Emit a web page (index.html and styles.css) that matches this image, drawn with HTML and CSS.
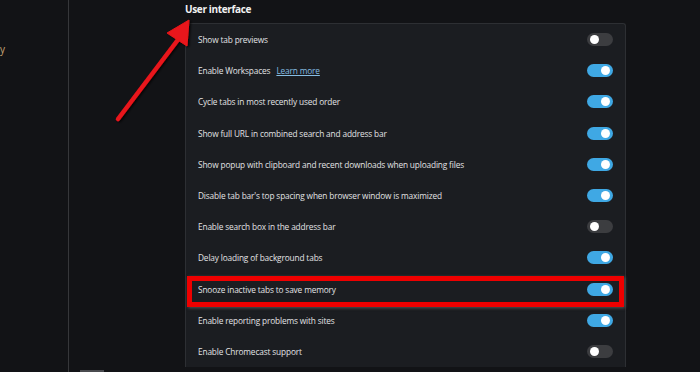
FILE: index.html
```html
<!doctype html>
<html lang="en">
<head>
    <meta charset="UTF-8">
    <title>Settings</title>
    <link rel="stylesheet" href="styles.css">
</head>
<body>
    <div class="sidebar">
        <span class="side-label">y</span>
        <div class="side-scroll"></div>
    </div>
    <div class="main">
        <div class="section">
            <div class="section-title">User interface</div>
            <div class="card">
                <div class="row"><span class="label">Show tab previews</span><span class="toggle"></span></div>
                <div class="row"><span class="label">Enable Workspaces <a class="link">Learn more</a></span><span class="toggle on"></span></div>
                <div class="row"><span class="label">Cycle tabs in most recently used order</span><span class="toggle on"></span></div>
                <div class="row"><span class="label">Show full URL in combined search and address bar</span><span class="toggle on"></span></div>
                <div class="row"><span class="label">Show popup with clipboard and recent downloads when uploading files</span><span class="toggle on"></span></div>
                <div class="row"><span class="label">Disable tab bar's top spacing when browser window is maximized</span><span class="toggle on"></span></div>
                <div class="row"><span class="label">Enable search box in the address bar</span><span class="toggle"></span></div>
                <div class="row"><span class="label">Delay loading of background tabs</span><span class="toggle on"></span></div>
                <div class="row marked"><span class="label">Snooze inactive tabs to save memory</span><span class="toggle on"></span><div class="highlight"></div></div>
                <div class="row"><span class="label">Enable reporting problems with sites</span><span class="toggle on"></span></div>
                <div class="row"><span class="label">Enable Chromecast support</span><span class="toggle"></span></div>
            </div>
        </div>
    </div>

    <!-- annotation arrow -->
    <svg class="arrow" width="110" height="120" viewBox="0 0 110 120">
        <defs>
            <filter id="shade" x="-20%" y="-20%" width="140%" height="140%">
                <feDropShadow dx="1.5" dy="1" stdDeviation="1" flood-color="#000" flood-opacity="0.8"/>
            </filter>
        </defs>
        <g filter="url(#shade)" fill="#e8141a" stroke="#e8141a">
            <line x1="18" y1="102" x2="80" y2="20" stroke-width="4.5" stroke-linecap="round"/>
            <polygon points="89,3 87,29 67,16" stroke-width="1" stroke-linejoin="round"/>
        </g>
    </svg>
</body>
</html>
```

FILE: styles.css
```css
* {
    margin: 0;
    padding: 0;
    box-sizing: border-box;
}

body {
    width: 700px;
    height: 372px;
    overflow: hidden;
    display: flex;
    background-color: #121316;
    font-family: "Open Sans", "Noto Sans", sans-serif;
    color: #e2e3e5;
    position: relative;
}

.sidebar {
    width: 69px;
    flex-shrink: 0;
    border-right: 1px solid #36373a;
    position: relative;
}

.side-label {
    position: absolute;
    left: 0;
    top: 42px;
    font-size: 10px;
    color: #c9a574;
}

.side-scroll {
    position: absolute;
    left: 80px;
    bottom: 0;
    width: 24px;
    height: 2px;
    background-color: #4a4b4f;
}

.main {
    flex: 1;
    padding-left: 116px;
}

.section {
    width: 441px;
}

.section-title {
    height: 23px;
    line-height: 19px;
    font-size: 10px;
    font-weight: 700;
    letter-spacing: -0.35px;
    color: #f1f1f2;
}

.card {
    background-color: #1b1d21;
    border: 1px solid #2d2f33;
    border-bottom: none;
    border-radius: 3px 3px 0 0;
}

.row {
    height: 31.2px;
    display: flex;
    align-items: center;
    justify-content: space-between;
    padding: 0 12px 0 12px;
    font-size: 8.3px;
    letter-spacing: -0.15px;
    position: relative;
}

.label {
    white-space: nowrap;
}

.link {
    margin-left: 4px;
    color: #86bde3;
    text-decoration: underline;
}

.toggle {
    width: 26px;
    height: 13px;
    border-radius: 7px;
    background-color: #3c3d40;
    position: relative;
}

.toggle::after {
    content: "";
    position: absolute;
    left: 3px;
    top: 2px;
    width: 9px;
    height: 9px;
    border-radius: 50%;
    background-color: #ffffff;
}

.toggle.on {
    background-color: #3fa8e4;
}

.toggle.on::after {
    left: 14px;
}

.highlight {
    position: absolute;
    left: 1px;
    right: 1px;
    top: 2px;
    height: 31px;
    border: 5px solid #ee0000;
    box-shadow: 1px 1px 3px rgba(120, 120, 120, 0.6);
}

.arrow {
    position: absolute;
    left: 100px;
    top: 17px;
}
```
